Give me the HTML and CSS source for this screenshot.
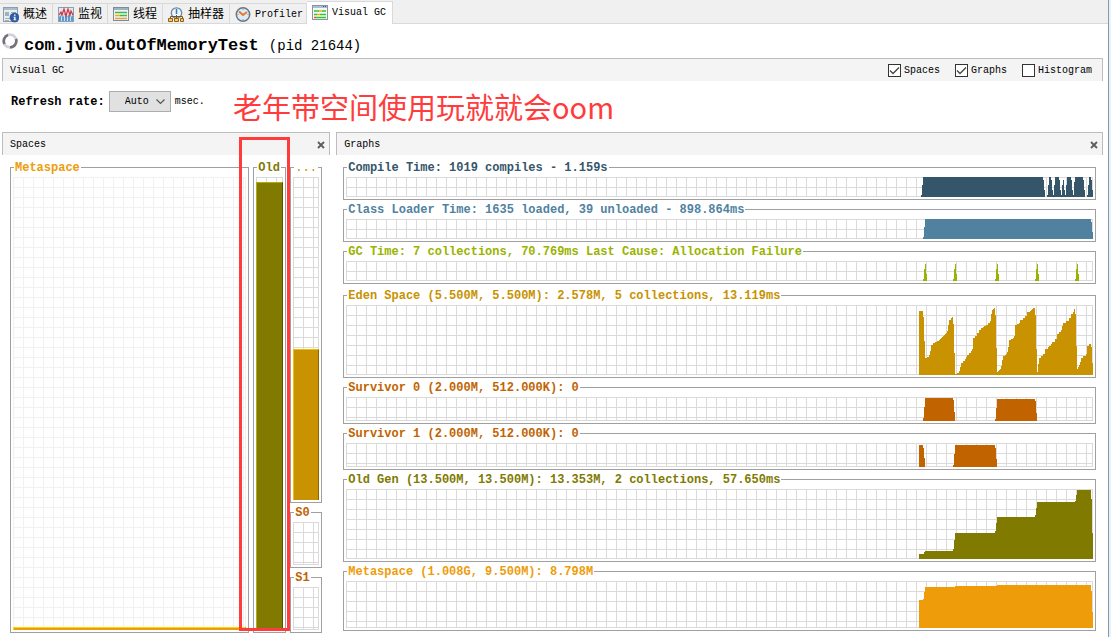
FILE: index.html
```html
<!DOCTYPE html>
<html lang="zh-CN">
<head>
<meta charset="utf-8">
<title>Visual GC</title>
<link rel="stylesheet" href="styles.css">
</head>
<body>
<main class="window">
  <nav class="tabs" role="tablist">
    <button class="tab" role="tab" type="button">
      <svg class="icon" viewBox="0 0 16 16"><rect x=".5" y=".5" width="14" height="14" fill="#e8edf2" stroke="#8e9dab"/><path d="M1 1h13v2H1z" fill="#a9bccd"/><path d="M2 5h4v4H2z" fill="#9fb0c0"/><path d="M8 5.500h5M8 7.500h3M2 11.500h5M2 13.500h4" stroke="#a8b0b8"/><circle cx="11.500" cy="10.500" r="4.500" fill="#2d5da8" stroke="#1f4279" stroke-width=".6"/><path d="M11 7.500h1.500v1.300H11zM10.500 9.700h2v2.800h.8v.8h-2.900v-.8h.8v-2h-.7z" fill="#fff"/></svg>
      <span>概述</span>
    </button>
    <button class="tab" role="tab" type="button">
      <svg class="icon" viewBox="0 0 16 16"><rect x=".5" y=".5" width="15" height="14" fill="#dce8f2" stroke="#8aa0b4"/><path d="M1 10l2-2 2 2 2-4 2 4 2-3 2 3 2-2v6H1z" fill="#5b9bd0"/><path d="M3.500 9v5M6.500 8v6M9.500 10v4M12.500 9v5" stroke="#c9e2f5"/><path d="M1 8l2-3 1 3 2-6 2 7 2-7 2 6 1-4 2 4" fill="none" stroke="#d9323a" stroke-width="1.200"/></svg>
      <span>监视</span>
    </button>
    <button class="tab" role="tab" type="button">
      <svg class="icon" viewBox="0 0 16 16"><rect x=".5" y=".5" width="15" height="13" fill="#eef2f5" stroke="#7f8b96"/><path d="M1 1h14v2H1z" fill="#9fb2c4"/><path d="M2 5.500h12" stroke="#42b649" stroke-width="1.500"/><path d="M2 8.500h5" stroke="#e9b000" stroke-width="1.500"/><path d="M7 8.500h7" stroke="#42b649" stroke-width="1.500"/><path d="M2 11.500h12" stroke="#e8a33c" stroke-width="1.500"/></svg>
      <span>线程</span>
    </button>
    <button class="tab" role="tab" type="button">
      <svg class="icon" viewBox="0 0 16 16"><circle cx="8.500" cy="6" r="5.200" fill="#eef5fb" stroke="#71889c" stroke-width="1.300"/><path d="M8.500 2v5" stroke="#2f7ec0" stroke-width="1.500"/><path d="M2.500 11V9.500h12V11M8.500 8v3" fill="none" stroke="#7d5716"/><path d="M.5 11.500h4v3h-4zM6.500 11.500h4v3h-4zM12.500 11.500h3v3h-3z" fill="#f6cb67" stroke="#8d611a"/></svg>
      <span>抽样器</span>
    </button>
    <button class="tab tab--latin" role="tab" type="button">
      <svg class="icon" viewBox="0 0 16 16"><circle cx="8" cy="7.500" r="6.700" fill="#dcebf6" stroke="#6b7680" stroke-width="1.500"/><path d="M8 2v1M8 12v1M2.500 7.500h1M12.500 7.500h1" stroke="#7c93a6"/><path d="M4 4.500L8 8l4-3" fill="none" stroke="#e5782c" stroke-width="2"/></svg>
      <span>Profiler</span>
    </button>
    <button class="tab tab--active" role="tab" type="button" aria-selected="true">
      <svg class="icon" viewBox="0 0 16 16"><rect x=".5" y=".5" width="15" height="14" fill="#f6f7f8" stroke="#8b959e"/><path d="M1 1h14v2H1z" fill="#a9bfd5"/><path d="M11 1h1v1h-1zM13 1h1v1h-1z" fill="#39536d"/><path d="M2 6h5M10 6h4M2 9.500h3M8 9.500h6M4 12.500h10" stroke="#2fc52f" stroke-width="1.500"/><path d="M7 6h3M5 9.500h3" stroke="#f0b400" stroke-width="1.500"/><path d="M2 12.500h2" stroke="#e34a2f" stroke-width="1.500"/></svg>
      <span>Visual GC</span>
    </button>
  </nav>

  <header class="title">
    <svg class="icon" viewBox="0 0 16 16"><circle cx="8" cy="8" r="6.300" fill="none" stroke="#d2d2d6" stroke-width="2.800"/><path d="M2.500 11A6.300 6.300 0 0 1 6 2.100M14 6A6.300 6.300 0 0 1 8 14.300" fill="none" stroke="#72727c" stroke-width="2.600"/></svg>
    <h1 class="title__text">com.jvm.OutOfMemoryTest <span class="title__pid">(pid 21644)</span></h1>
  </header>

  <section class="bar">
    <h2 class="bar__name">Visual GC</h2>
    <div class="checks">
      <label class="check"><input type="checkbox" checked><span>Spaces</span></label>
      <label class="check"><input type="checkbox" checked><span>Graphs</span></label>
      <label class="check"><input type="checkbox"><span>Histogram</span></label>
    </div>
  </section>

  <div class="refresh">
    <label class="refresh__label" for="rate">Refresh rate:</label>
    <span class="picker">
      <select class="picker__select" id="rate"><option>Auto</option></select>
      <svg class="picker__arrow" viewBox="0 0 9 6"><path d="M.5 .5l4 4 4-4" fill="none" stroke="#555" stroke-width="1.200"/></svg>
    </span>
    <span>msec.</span>
    <p class="note">老年带空间使用玩就就会oom</p>
  </div>

  <div class="panels">
    <section class="panel panel--spaces">
      <div class="bar">
        <h2 class="bar__name">Spaces</h2>
        <button class="close" type="button" aria-label="Close Spaces"><svg viewBox="0 0 8 8"><path d="M1 1l6 6M7 1L1 7" stroke="#5c5c5c" stroke-width="1.800"/></svg></button>
      </div>
      <div class="spaces">
        <fieldset class="box box--fill meta">
          <legend>Metaspace</legend>
          <div class="plot plot--faint"><div class="level level--thin"></div></div>
        </fieldset>
        <div class="old-column">
          <fieldset class="box box--fill old">
            <legend>Old</legend>
            <div class="plot"><div class="level" style="height:99%"></div></div>
          </fieldset>
          <div class="highlight"></div>
        </div>
        <div class="young">
          <fieldset class="box box--fill eden">
            <legend class="legend--light">...</legend>
            <div class="plot"><div class="level" style="height:46.8%"></div></div>
          </fieldset>
          <fieldset class="box survivor">
            <legend>S0</legend>
            <div class="plot plot--cell"></div>
          </fieldset>
          <fieldset class="box survivor">
            <legend>S1</legend>
            <div class="plot plot--cell"></div>
          </fieldset>
        </div>
      </div>
    </section>

    <section class="panel panel--graphs">
      <div class="bar">
        <h2 class="bar__name">Graphs</h2>
        <button class="close" type="button" aria-label="Close Graphs"><svg viewBox="0 0 8 8"><path d="M1 1l6 6M7 1L1 7" stroke="#5c5c5c" stroke-width="1.800"/></svg></button>
      </div>
      <div class="graphs">
        <fieldset class="box compile">
          <legend>Compile Time: 1019 compiles - 1.159s</legend>
          <div class="plot plot--short"><svg class="series" viewBox="0 0 174 20"><path d="M2 20V18H3V8H4V0H124V3H125V13H126V20ZM128 20V18H129V8H130V0H132V3H133V13H134V18H135V8H136V0H140V3H141V13H142V18H143V8H144V3H145V13H146V18H147V8H148V0H152V3H153V13H154V18H155V5H156V0H164V3H165V13H166V20ZM168 20V18H169V8H170V0H172V3H173V13H174V20Z"/></svg></div>
        </fieldset>
        <fieldset class="box loader">
          <legend>Class Loader Time: 1635 loaded, 39 unloaded - 898.864ms</legend>
          <div class="plot plot--short"><svg class="series" viewBox="0 0 174 20"><path d="M4 20V18H5V8H6V0H172V3H173V13H174V20Z"/></svg></div>
        </fieldset>
        <fieldset class="box gc">
          <legend>GC Time: 7 collections, 70.769ms Last Cause: Allocation Failure</legend>
          <div class="plot plot--short"><svg class="series" viewBox="0 0 174 20"><path d="M4 20v-2h1v-10h1v-5h1v10h1v7zM34 20v-2h1v-10h1v-5h1v10h1v7zM76 20v-2h1v-10h1v-5h1v10h1v7zM116 20v-2h1v-10h1v-5h1v10h1v7zM156 20v-2h1v-10h1v-5h1v10h1v7z"/></svg></div>
        </fieldset>
        <fieldset class="box eden eden-graph">
          <legend>Eden Space (5.500M, 5.500M): 2.578M, 5 collections, 13.119ms</legend>
          <div class="plot plot--tall"><svg class="series" viewBox="0 0 174 70"><path d="M0 70V6H4V12H5V36H6V53H8V52H10V50H11V46H12V40H14V38H16V37H18V36H20V35H21V34H22V33H23V32H24V31H25V30H26V29H27V28H28V26H29V20H30V15H32V13H33V12H34V19H35V48H36V69H38V68H40V66H41V62H42V58H44V56H46V54H47V52H48V50H50V48H52V46H53V44H54V33H56V31H58V28H60V25H62V23H64V22H65V21H67V20H69V18H71V16H72V9H73V5H74V4H75V3H76V10H77V43H78V67H79V66H80V65H81V64H82V61H83V55H84V51H86V50H87V49H88V47H89V42H90V35H92V34H94V33H95V31H96V20H98V19H100V18H101V15H104V13H106V11H108V7H111V6H112V5H113V4H114V3H116V10H117V44H118V67H119V59H120V53H122V51H124V49H126V44H129V42H130V41H132V39H133V37H136V34H138V29H140V27H142V25H143V21H144V18H147V16H150V13H152V9H154V7H155V4H156V9H157V41H158V64H159V62H160V60H161V57H162V53H164V51H167V49H168V41H170V39H172V42H173V58H174V70Z"/></svg></div>
        </fieldset>
        <fieldset class="box survivor">
          <legend>Survivor 0 (2.000M, 512.000K): 0</legend>
          <div class="plot plot--medium"><svg class="series" viewBox="0 0 174 24"><path d="M4 24V21H5V10H6V1H34V3H35V15H36V24ZM76 24V22H77V11H78V2H116V4H117V16H118V24Z"/></svg></div>
        </fieldset>
        <fieldset class="box survivor">
          <legend>Survivor 1 (2.000M, 512.000K): 0</legend>
          <div class="plot plot--medium"><svg class="series" viewBox="0 0 174 24"><path d="M0 24V2H4V5H5V15H6V24ZM34 24V22H35V11H36V2H76V5H77V16H78V24Z"/></svg></div>
        </fieldset>
        <fieldset class="box old">
          <legend>Old Gen (13.500M, 13.500M): 13.353M, 2 collections, 57.650ms</legend>
          <div class="plot plot--tall"><svg class="series" viewBox="0 0 174 70"><path d="M0 70V65H5V63H6V62H34V60H35V51H36V44H76V42H77V34H78V28H116V26H117V19H118V13H156V12H157V6H158V1H172V10H173V44H174V70Z"/></svg></div>
        </fieldset>
        <fieldset class="box meta">
          <legend>Metaspace (1.008G, 9.500M): 8.798M</legend>
          <div class="plot plot--large"><svg class="series" viewBox="0 0 174 47"><path d="M0 47V19H4V18H5V11H6V6H36V5H78V4H172V10H173V31H174V47Z"/></svg></div>
        </fieldset>
      </div>
    </section>
  </div>
</main>
</body>
</html>
```

FILE: styles.css
```css
* {
  box-sizing: border-box;
}

body {
  margin: 0;
  background: #f0f0f0;
  color: #000;
  font: 10px/12px "Liberation Mono", "Noto Sans CJK SC", monospace;
}

h1,
h2,
p {
  margin: 0;
  font: inherit;
}

button,
select,
input {
  margin: 0;
  font: inherit;
  color: inherit;
}

.window {
  display: flex;
  flex-direction: column;
  min-height: 100vh;
  margin-right: 2px;
  border-right: 1px solid #7a9cbd;
  background: #fff;
}

.icon {
  flex: none;
  width: 16px;
  height: 16px;
}

/* Tabs */
.tabs {
  display: flex;
  align-items: flex-end;
  height: 24px;
  background: linear-gradient(#d9d9d9, #d9d9d9) bottom / 100% 1px no-repeat #f0f0f0;
}

.tab {
  display: flex;
  align-items: center;
  gap: 4px;
  height: 21px;
  padding: 2px 5px 0;
  border: solid #d9d9d9;
  border-width: 1px 1px 1px 0;
  background: #f0f0f0;
  font-size: 12px;
  white-space: nowrap;
}

.tab:first-child {
  padding-left: 3px;
}

.tab--latin {
  padding-right: 3px;
  font-size: 10px;
}

.tab--active {
  height: 23px;
  padding: 0 6px 1px 5px;
  border-bottom: 0;
  background: #fff;
  font-size: 10px;
}

/* Application title */
.title {
  display: flex;
  align-items: center;
  gap: 6px;
  height: 34px;
  padding: 0 2px;
}

.title__text {
  padding-top: 10px;
  font-size: 17px;
  line-height: 20px;
  font-weight: bold;
}

.title__pid {
  font-size: 14px;
  font-weight: normal;
}

/* Section bars */
.bar {
  display: flex;
  align-items: center;
  justify-content: space-between;
  height: 23px;
  padding: 1px 4px 0 7px;
  border: solid #bdbdbd;
  border-width: 1px 1px 0;
  background: #f4f4f4;
}

.window > .bar {
  margin: 0 5px 0 2px;
}

.checks {
  display: flex;
  gap: 15px;
  padding-right: 6px;
}

.check {
  display: flex;
  align-items: center;
  gap: 3px;
}

.check input {
  appearance: none;
  width: 13px;
  height: 13px;
  border: 1px solid #333;
  background: #fff;
}

.check input:checked {
  background: #fff url("data:image/svg+xml,%3Csvg xmlns='http://www.w3.org/2000/svg' viewBox='0 0 11 11'%3E%3Cpath d='M1 5.500l3 3 6-6' fill='none' stroke='%23444' stroke-width='1.300'/%3E%3C/svg%3E");
}

.close {
  display: flex;
  width: 8px;
  height: 8px;
  padding: 0;
  border: 0;
  background: none;
}

/* Refresh controls */
.refresh {
  position: relative;
  display: flex;
  align-items: center;
  gap: 4px;
  padding: 10px 11px 20px;
}

.refresh__label {
  font-size: 12px;
  font-weight: bold;
}

.picker {
  position: relative;
}

.picker__select {
  appearance: none;
  display: block;
  width: 62px;
  height: 21px;
  padding: 0 0 0 15px;
  border: 1px solid #adadad;
  border-radius: 0;
  background: #e1e1e1;
}

.picker__arrow {
  position: absolute;
  top: 8px;
  right: 6px;
  width: 9px;
  height: 6px;
  pointer-events: none;
}

.note {
  position: absolute;
  top: 5px;
  left: 233px;
  color: #ff3b3b;
  font: 29px/40px "Noto Sans CJK SC", sans-serif;
  white-space: nowrap;
}

/* Panels */
.panels {
  display: flex;
  flex: 1;
  gap: 6px;
  padding: 0 5px 0 2px;
}

.panel {
  display: flex;
  flex-direction: column;
  min-width: 0;
}

.panel--spaces {
  width: calc(30% - 2px);
}

.panel--graphs {
  flex: 1;
}

.spaces {
  display: flex;
  flex: 1;
  gap: 4px;
  padding: 5px 8px 4px;
}

.spaces > .meta {
  flex: 1;
}

.old-column,
.young {
  display: flex;
  flex-direction: column;
}

.old-column {
  position: relative;
  width: 33px;
}

.young {
  gap: 2px;
  width: 32px;
}

.graphs {
  display: flex;
  flex-direction: column;
  gap: 2px;
  padding: 5px 7px;
}

/* Titled boxes */
.box {
  min-width: 0;
  margin: 0;
  padding: 2px 2px 2px;
  border: 1px solid #a0a0a0;
}

.box--fill {
  display: flex;
  flex: 1;
  flex-direction: column;
}

.eden-graph {
  margin-top: 2px;
}

.box legend {
  margin-left: 1px;
  padding: 2px 1px 0;
  color: var(--tone);
  font-size: 12px;
  line-height: 13px;
  font-weight: bold;
  white-space: nowrap;
}

.box .legend--light {
  font-weight: normal;
}

.compile { --tone: #35566a; }
.loader { --tone: #5082a0; }
.gc { --tone: #99b300; }
.eden { --tone: #c89200; --lit: #f0c000; --shade: #8c6600; }
.survivor { --tone: #c16400; }
.old { --tone: #807a00; --lit: #b4ac00; --shade: #565200; }
.meta { --tone: #ee9c0a; --lit: #ffd400; --shade: #a66d07; }

/* Ruled 10px grid, closed by a line on the right and bottom edges */
.plot {
  --rule: #dadada;
  display: flex;
  align-items: flex-end;
  justify-content: flex-end;
  background:
    linear-gradient(var(--rule), var(--rule)) right / 1px 100% no-repeat,
    linear-gradient(var(--rule), var(--rule)) bottom / 100% 1px no-repeat,
    linear-gradient(90deg, var(--rule) 1px, transparent 1px) 0 0 / 10px 10px,
    linear-gradient(var(--rule) 1px, transparent 1px) 0 0 / 10px 10px;
}

.box--fill .plot {
  flex: 1;
}

.plot--faint { --rule: #f1f1f1; }
.plot--short { height: 20px; }
.plot--medium { height: 24px; }
.plot--cell { height: 43px; }
.plot--large { height: 47px; }
.plot--tall { height: 70px; }

.series {
  width: 174px;
  height: 100%;
  fill: var(--tone);
  shape-rendering: crispEdges;
}

.level {
  width: 100%;
  border: solid;
  border-width: 1px 1px 0;
  border-color: var(--lit) var(--shade) var(--lit) var(--lit);
  background: var(--tone);
}

.level--thin {
  height: 3px;
}

.highlight {
  position: absolute;
  top: -23px;
  right: -4px;
  bottom: 2px;
  left: -14px;
  z-index: 1;
  border: 3px solid #ff3b3b;
  pointer-events: none;
}
```
